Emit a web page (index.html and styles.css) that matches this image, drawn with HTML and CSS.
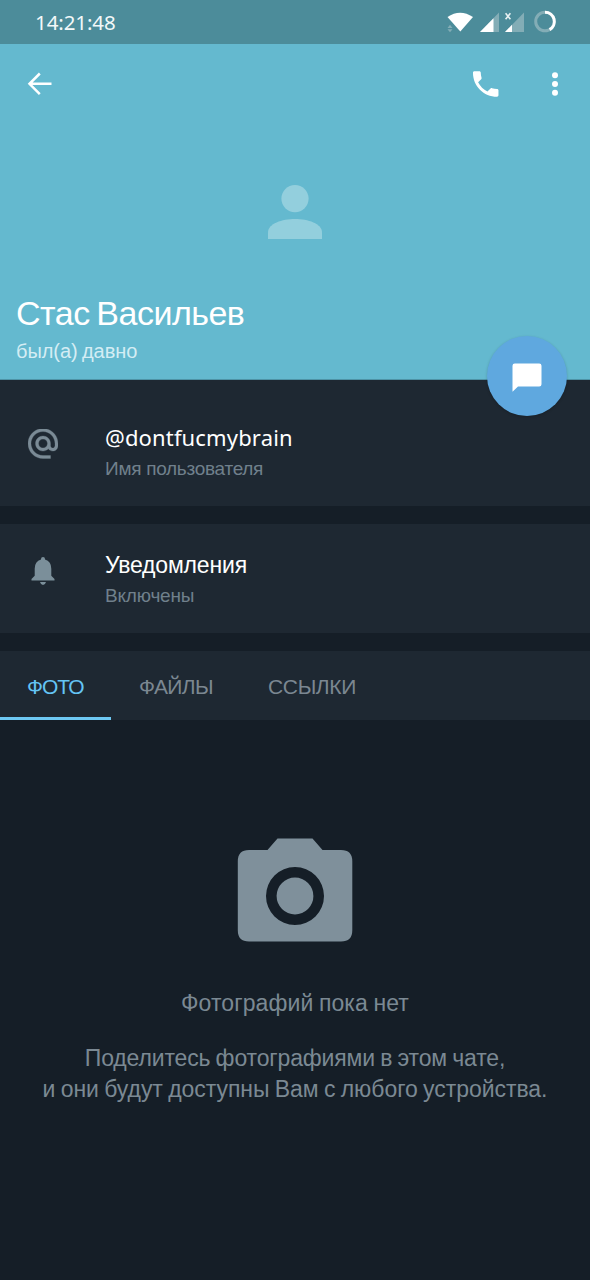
FILE: index.html
```html
<!DOCTYPE html>
<html lang="ru">
<head>
<meta charset="utf-8">
<title>Стас Васильев</title>
<link rel="stylesheet" href="styles.css">
</head>
<body>
<div class="screen">
  <div class="status-bar">
    <span class="clock">14:21:48</span>
    <svg class="status-icons" width="112" height="24" viewBox="446 10 112 24">
      <path fill="#fff" d="M447.500 17Q460 8.500 473 17L460.300 31.500Z"/>
      <path fill="#83adb6" d="M447.500 28l2.500-3.200 2.500 3.200zM447.500 29.200h5l-2.500 3z"/>
      <path fill="#83adb6" d="M499 12.500V32h-19z"/>
      <path fill="#fff" d="M493.500 18.200V32H480z"/>
      <path fill="#83adb6" d="M524 12.500V32h-19z"/>
      <path fill="#fff" d="M512 24.800V32h-7z"/>
      <path fill="none" stroke="#e7f0f2" stroke-width="1.600" d="M505.600 13.200l4.800 6M510.400 13.200l-4.800 6"/>
      <circle cx="545" cy="21.500" r="9.300" fill="none" stroke="#83adb6" stroke-width="3"/>
      <path fill="none" stroke="#fff" stroke-width="3" d="M545 12.200A9.300 9.300 0 0 1 549.600 29.600"/>
    </svg>
  </div>

  <header class="hero">
    <div class="toolbar">
      <svg class="back" width="26" height="26" viewBox="0 0 26 26"><path fill="none" stroke="#fff" stroke-width="2.500" d="M24.500 12.800H2.500M12.800 2.500L2.500 12.800l10.300 10.300"/></svg>
      <svg class="call" width="34" height="34" viewBox="0.2 0 24 24"><path fill="#fff" d="M6.620 10.790c1.440 2.830 3.760 5.140 6.590 6.590l2.200-2.200c.27-.27.67-.36 1.020-.24 1.120.37 2.330.57 3.570.57.550 0 1 .45 1 1V20c0 .55-.45 1-1 1-9.390 0-17-7.610-17-17 0-.55.45-1 1-1h3.500c.55 0 1 .45 1 1 0 1.250.2 2.450.57 3.570.11.350.03.740-.25 1.020l-2.200 2.200z"/></svg>
      <svg class="more" width="8" height="26" viewBox="0 0 8 26"><g fill="#fff"><circle cx="4" cy="4.300" r="3"/><circle cx="4" cy="13" r="3"/><circle cx="4" cy="21.700" r="3"/></g></svg>
    </div>
    <svg class="avatar" width="54" height="55" viewBox="0 0 54 55"><g fill="#93cfdd"><circle cx="27" cy="13.600" r="13.600"/><path d="M0 54V47.500C0 38.500 14 34 27 34S54 38.500 54 47.500V54z"/></g></svg>
    <h1 class="name">Стас Васильев</h1>
    <div class="seen">был(а) давно</div>
    <div class="fab">
      <svg width="30" height="29" viewBox="0 0 30 29"><path fill="#fff" d="M2.800.5h24.400q2.300 0 2.300 2.300v18.500q0 2.300-2.300 2.300H6L.5 28.800V2.800Q.5.500 2.800.5z"/></svg>
    </div>
  </header>

  <section class="row username">
    <svg class="icon" width="30" height="30" viewBox="2 2.300 20 20"><path fill="#7b8b96" stroke="#7b8b96" stroke-width=".2" d="M12 2C6.480 2 2 6.480 2 12s4.480 10 10 10h5v-2h-5c-4.340 0-8-3.660-8-8s3.660-8 8-8 8 3.660 8 8v1.430c0 .79-.71 1.570-1.500 1.570s-1.500-.78-1.500-1.570V12c0-2.760-2.240-5-5-5s-5 2.240-5 5 2.240 5 5 5c1.380 0 2.640-.56 3.540-1.470.65.890 1.770 1.470 2.960 1.470 1.970 0 3.500-1.600 3.500-3.570V12c0-5.520-4.480-10-10-10zm0 13c-1.660 0-3-1.340-3-3s1.340-3 3-3 3 1.340 3 3-1.340 3-3 3z"/></svg>
    <div class="info">
      <div class="value handle">@dontfucmybrain</div>
      <div class="label">Имя пользователя</div>
    </div>
  </section>

  <section class="row notifications">
    <svg class="icon" width="30" height="30" viewBox="0 0 30 30"><path fill="#7b8f9a" d="M13 3.500V3a2 2 0 0 1 4 0v.5q6.300 1.800 6.300 9.200v7.100l3.200 3.200v1.500h-23V23l3.200-3.200v-7.100Q6.700 5.300 13 3.500zM12 26h6q-.8 3-3 3t-3-3z"/></svg>
    <div class="info">
      <div class="value notify">Уведомления</div>
      <div class="label enabled">Включены</div>
    </div>
  </section>

  <nav class="tabs">
    <div class="tab active">ФОТО</div>
    <div class="tab files">ФАЙЛЫ</div>
    <div class="tab links">ССЫЛКИ</div>
  </nav>

  <main class="empty">
    <svg width="116" height="104" viewBox="0 0 116 104"><path fill="#7f909b" fill-rule="evenodd" d="M40.500.5h35l10 11.500H104q11.300 0 11.300 11.300v69Q115.300 103.600 104 103.600H12Q.8 103.600.8 92.300v-69Q.8 12 12 12h18.500zM58 29a29 29 0 1 0 0 58 29 29 0 1 0 0-58z"/><circle cx="58" cy="58" r="18.400" fill="#7f909b"/></svg>
    <p class="empty-title">Фотографий пока нет</p>
    <p class="line-a">Поделитесь фотографиями в этом чате,</p>
    <p class="line-b">и они будут доступны Вам с любого устройства.</p>
  </main>
</div>
</body>
</html>
```
FILE: styles.css
```css
* { box-sizing: border-box; }
body {
  margin: 0;
  background: #151e27;
  font-family: "Liberation Sans", Arial, sans-serif;
}
h1, p { margin: 0; font-weight: 400; }
svg { display: block; flex: none; }
.screen {
  width: 590px;
  height: 1280px;
  overflow: hidden;
  display: flex;
  flex-direction: column;
  white-space: nowrap;
}
.status-bar {
  height: 44px;
  flex: none;
  background: #4c8c9a;
  display: flex;
  align-items: center;
  justify-content: space-between;
  padding: 0 32px 0 35px;
}
.clock {
  color: #f2f8f9;
  font: 20.5px/44px "Noto Sans", sans-serif;
  letter-spacing: -.1px;
}
.hero {
  height: 336px;
  flex: none;
  position: relative;
  background: #64b9cf;
  border-bottom: 1px solid #4e93a6;
}
.toolbar {
  height: 80px;
  display: flex;
  align-items: center;
  padding: 0 31px 0 27px;
}
.call { margin-left: auto; margin-right: 48.5px; }
.avatar { margin: 61px auto 0; }
.name {
  margin: 53px 0 0 16px;
  color: #fff;
  font-size: 34px;
  line-height: 40px;
  letter-spacing: -.5px;
  word-spacing: -2.300px;
}
.seen {
  margin: 5px 0 0 16px;
  color: #d4edf4;
  font-size: 20px;
  line-height: 26px;
  letter-spacing: -.05px;
  word-spacing: -1.200px;
}
.fab {
  position: absolute;
  right: 23px;
  bottom: -37px;
  width: 80px;
  height: 80px;
  border-radius: 50%;
  background: #5fa8df;
  box-shadow: 0 1px 3px rgba(0, 0, 0, .2);
  display: grid;
  place-items: center;
  padding-top: 3px;
}
.row {
  flex: none;
  display: flex;
  background: #1e2832;
  padding-left: 28px;
}
.username { height: 126px; padding-top: 43px; }
.username .icon { margin-top: 6px; }
.notifications { height: 109px; margin: 18px 0; padding-top: 26px; }
.notifications .icon { margin-top: 6px; }
.info { margin-left: 47px; }
.value { color: #fff; font-size: 23px; line-height: 30px; margin-bottom: 1px; }
.notify { letter-spacing: -.17px; }
.handle {
  font-family: "Noto Sans", sans-serif;
  font-size: 22px;
  line-height: 28px;
  margin-bottom: 3px;
  letter-spacing: .15px;
}
.label { color: #70808c; font-size: 19px; line-height: 30px; letter-spacing: -.28px; }
.enabled { letter-spacing: -.18px; }
.tabs {
  height: 69px;
  flex: none;
  display: flex;
  background: #1e2832;
  color: #7b8791;
  font-size: 21px;
  line-height: 72px;
}
.tab { padding-left: 27px; }
.active {
  width: 111px;
  color: #64c4f5;
  border-bottom: 3px solid #6dc8f3;
  letter-spacing: -1px;
}
.files { width: 130px; padding-left: 28px; letter-spacing: -.6px; }
.links { letter-spacing: -.35px; }
.empty {
  display: flex;
  flex-direction: column;
  align-items: center;
  padding-top: 118px;
  color: #7b8993;
  font-size: 23px;
  line-height: 31px;
}
.empty-title { margin: 46px 0 24px; letter-spacing: .1px; word-spacing: -1px; }
.line-a { letter-spacing: -.15px; word-spacing: -1px; }
.line-b { letter-spacing: -.05px; word-spacing: -1px; }
```
